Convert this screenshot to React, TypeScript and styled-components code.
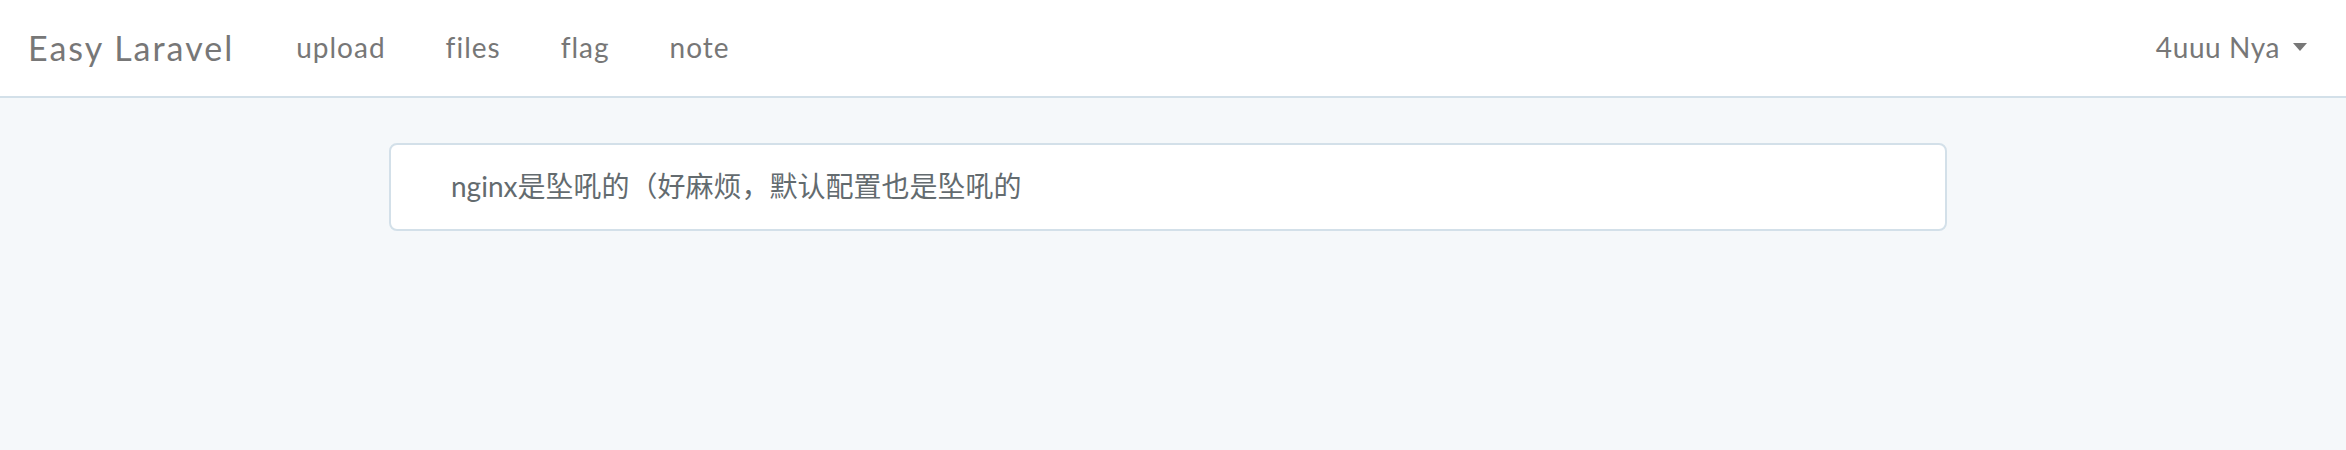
import React from 'react';
import styled, { createGlobalStyle } from 'styled-components';

const GlobalStyle = createGlobalStyle`
  html, body {
    margin: 0;
    padding: 0;
    background: #f5f8fa;
  }

  body {
    font-family: Lato, 'Noto Sans CJK SC', sans-serif;
    color: #636b6f;
  }
`;

const links = ['upload', 'files', 'flag', 'note'];

const App = () => {
  return (
    <>
      <GlobalStyle />
      <Navbar>
        <NavLeft>
          <Brand>Easy Laravel</Brand>
          <NavList>
            {links.map((link) => (
              <NavLink key={link}>{link}</NavLink>
            ))}
          </NavList>
        </NavLeft>
        <UserMenu>
          4uuu Nya
          <Caret />
        </UserMenu>
      </Navbar>
      <Main>
        <Panel>
          <PanelText>nginx是坠吼的（好麻烦，默认配置也是坠吼的</PanelText>
        </Panel>
      </Main>
    </>
  );
};

export default App;

const Navbar = styled.nav`
  display: flex;
  justify-content: space-between;
  align-items: center;
  height: 96px;
  background: #ffffff;
  border-bottom: 2px solid #d3e0e9;
  color: #777777;
`;

const NavLeft = styled.div`
  display: flex;
  align-items: center;
  height: 100%;
`;

const Brand = styled.a`
  padding: 0 32px 0 28px;
  font-size: 34px;
  line-height: 40px;
  letter-spacing: 2px;
  margin-top: -1px;
  cursor: pointer;
`;

const NavList = styled.ul`
  display: flex;
  list-style: none;
  margin: -2px 0 0;
  padding: 0;
`;

const NavLink = styled.li`
  padding: 0 30px;
  font-size: 28px;
  line-height: 40px;
  letter-spacing: 1px;
  cursor: pointer;
`;

const UserMenu = styled.a`
  display: flex;
  align-items: center;
  gap: 13px;
  margin-top: -2px;
  padding-right: 39px;
  font-size: 28px;
  line-height: 40px;
  letter-spacing: 0.6px;
  cursor: pointer;
`;

const Caret = styled.span`
  width: 0;
  height: 0;
  border-top: 8px solid #777777;
  border-left: 7px solid transparent;
  border-right: 7px solid transparent;
`;

const Main = styled.main`
  display: flex;
  justify-content: center;
  padding: 45px 10px 0 0;
`;

const Panel = styled.section`
  box-sizing: border-box;
  width: 1558px;
  background: #ffffff;
  border: 2px solid #d3e0e9;
  border-radius: 8px;
  padding: 20px 60px 22px;
`;

const PanelText = styled.p`
  margin: 0;
  font-size: 28px;
  line-height: 42px;
  color: #636b6f;
`;
